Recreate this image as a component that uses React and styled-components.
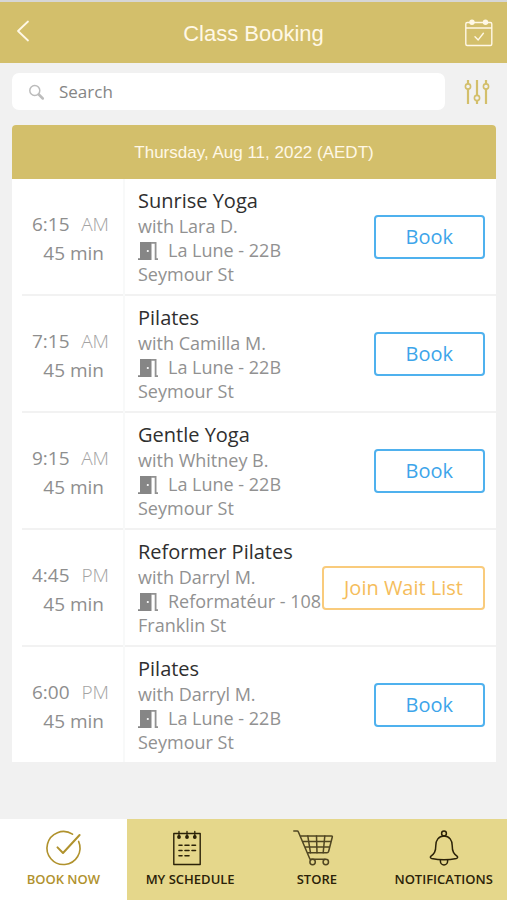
import React from 'react';
import styled, { createGlobalStyle } from 'styled-components';

const gold = '#d3bf6b';
const sans = '"Open Sans", "Noto Sans", sans-serif';
const headingFont = '"Liberation Sans", Arial, sans-serif';

const GlobalStyle = createGlobalStyle`
  *, *::before, *::after { box-sizing: border-box; }
  body { margin: 0; background: #f1f1f1; font-family: ${sans}; }
  button, input { font: inherit; }
  h1, h2, h3, p, ul { margin: 0; padding: 0; }
`;

const Page = styled.div`
  display: flex;
  flex-direction: column;
  min-height: 100vh;
  border-top: 2px solid #d6d6d6;
`;

const Header = styled.header`
  display: grid;
  grid-template-columns: 48px 1fr 48px;
  align-items: center;
  height: 61px;
  padding: 0 4px;
  background: ${gold};
  color: #fff8e6;
`;

const Title = styled.h1`
  font: 400 22px/28px ${headingFont};
  text-align: center;
  padding-top: 2px;
`;

const IconButton = styled.button`
  display: flex;
  align-items: center;
  justify-content: center;
  height: 40px;
  padding: 0;
  border: 0;
  background: none;
  color: inherit;
  cursor: pointer;
`;

const BackButton = styled(IconButton)`
  justify-content: flex-start;
  padding: 0 0 4px 12px;
`;

const SearchBar = styled.form`
  display: flex;
  align-items: center;
  gap: 14px;
  padding: 10px 12px 15px;
  color: ${gold};
`;

const SearchField = styled.label`
  display: flex;
  flex: 1;
  align-items: center;
  gap: 14px;
  height: 37px;
  padding: 0 16px;
  border-radius: 7px;
  background: #fff;
  color: #bcbcbc;
`;

const SearchInput = styled.input`
  flex: 1;
  min-width: 0;
  padding: 0;
  border: 0;
  outline: 0;
  background: none;
  color: #555;
  font-size: 17px;
  line-height: 24px;
  &::placeholder { color: #858585; opacity: 1; }
`;

const FilterButton = styled(IconButton)`
  width: 36px;
  height: 37px;
`;

const Card = styled.section`
  margin: 0 11px 24px 12px;
  border-radius: 4px 4px 0 0;
  background: #fff;
  overflow: hidden;
`;

const DateHeading = styled.h2`
  padding: 16px 8px 14px;
  background: ${gold};
  color: #fff8e6;
  font: 400 17px/24px ${headingFont};
  text-align: center;
`;

const ClassList = styled.ul`
  list-style: none;
`;

const ClassRow = styled.li`
  display: flex;
  align-items: stretch;
  padding-right: 11px;
  background: linear-gradient(#f2f2f2, #f2f2f2) 10px 100% / 100% 2px no-repeat;
  &:last-child { background: none; }
`;

const Time = styled.div`
  width: 113px;
  flex: none;
  padding: 31px 14px 0 20px;
  border-right: 2px solid #f8f9f9;
  color: #8e8e8e;
  font-size: 19px;
  line-height: 29px;
  text-align: right;
  white-space: nowrap;
`;

const ClockTime = styled.div`
  display: flex;
  justify-content: space-between;
`;

const Meridiem = styled.span`
  color: #a3a3a3;
  font-weight: 300;
`;

const Duration = styled.div`
  padding-right: 5px;
`;

const Details = styled.div`
  flex: 1;
  min-width: 0;
  padding: 9px 0 10px 13px;
  color: #919191;
  font-size: 18px;
  line-height: 24px;
  ${ClassRow}:last-child & { padding-bottom: 8px; }
`;

const ClassName = styled.h3`
  color: #2f2f2f;
  font-size: 20px;
  font-weight: 400;
  line-height: 26px;
  white-space: nowrap;
`;

const Place = styled.p`
  max-width: 186px;
  svg { margin-right: 10px; vertical-align: -4px; }
`;

const BookingButton = styled.button`
  flex: none;
  align-self: flex-start;
  height: 44px;
  margin-top: 36px;
  padding: 0 ${p => (p.$waitlist ? 20 : 30)}px;
  border: 2px solid ${p => (p.$waitlist ? '#f9cb7c' : '#4fb1ee')};
  border-radius: 4px;
  background: #fff;
  color: ${p => (p.$waitlist ? '#f5bd5c' : '#3da5ea')};
  font-size: 20px;
  line-height: 26px;
  white-space: nowrap;
  cursor: pointer;
`;

const TabBar = styled.nav`
  position: sticky;
  bottom: 0;
  display: grid;
  grid-template-columns: repeat(4, 1fr);
  margin-top: auto;
  background: #e5d78b;
`;

const Tab = styled.a`
  display: flex;
  flex-direction: column;
  align-items: center;
  height: 81px;
  padding-top: 9px;
  background: ${p => (p.$active ? '#fff' : 'transparent')};
  color: ${p => (p.$active ? '#b0922d' : '#2b2208')};
  font-size: 13px;
  font-weight: 600;
  line-height: 20px;
  text-decoration: none;
  white-space: nowrap;
  svg { margin-bottom: 1px; }
`;

const stroke = {
  fill: 'none',
  stroke: 'currentColor',
  strokeLinecap: 'round',
  strokeLinejoin: 'round',
  'aria-hidden': true,
};

const BackIcon = () => (
  <svg width="14" height="22" viewBox="0 0 14 22" {...stroke} strokeWidth="1.8">
    <path d="M12 1.5 2 11l10 9.5" />
  </svg>
);

const CalendarIcon = () => (
  <svg width="30" height="30" viewBox="0 0 30 30" {...stroke} strokeWidth="1.4">
    <path d="M6 4.5H3.2Q1.8 4.5 1.8 6V26Q1.8 27.5 3.2 27.5H26.4Q27.8 27.5 27.8 26V6Q27.8 4.5 26.4 4.5H23.5M10 4.5H19.5M1.8 10H27.8" />
    <circle cx="8" cy="4.3" r="2" fill="currentColor" />
    <circle cx="21.5" cy="4.3" r="2" fill="currentColor" />
    <path d="m11 18.7 3.2 3.2 5.2-6.6" />
  </svg>
);

const SearchIcon = () => (
  <svg width="17" height="18" viewBox="0 0 17 18" {...stroke}>
    <circle cx="6.8" cy="7.5" r="5" strokeWidth="1.5" />
    <path d="m10.8 11.5 4 4" strokeWidth="2.5" />
  </svg>
);

const FilterIcon = () => (
  <svg width="26" height="26" viewBox="0 0 26 26" {...stroke} strokeWidth="2.2" strokeLinecap="butt">
    <path d="M4 1V5M4 10V25M13 1V16.5M13 21.5V25M22 1V5M22 10V25" />
    <g strokeWidth="1.6">
      <circle cx="4" cy="7.5" r="2.6" />
      <circle cx="13" cy="19" r="2.6" />
      <circle cx="22" cy="7.5" r="2.6" />
    </g>
  </svg>
);

const DoorIcon = () => (
  <svg width="20" height="20" viewBox="0 0 20 20" fill="none" aria-hidden="true">
    <path d="M2 1h11.5v18H0V17.2h2z" fill="#868686" />
    <path d="M13 1.9h4.6v16.2H20" stroke="#929292" strokeWidth="1.8" />
    <circle cx="9.8" cy="10" r="1.1" fill="#fff" />
  </svg>
);

const BookIcon = () => (
  <svg width="40" height="40" viewBox="0 0 40 40" {...stroke} strokeWidth="1.6">
    <path d="M29.5 6.2A16.5 16.5 0 1 0 35.6 13.4" />
    <path d="m14.5 19.4 5.5 5.6L36.6 7" strokeWidth="2" />
  </svg>
);

const ScheduleIcon = () => (
  <svg width="40" height="40" viewBox="0 0 40 40" {...stroke} strokeWidth="1.4">
    <path d="M3.8 5.5H30.2V36.5H3.8Z" />
    <path d="M9 3.5V8M17 3.5V8M24.8 3.5V8" strokeWidth="1.3" />
    <g fill="currentColor">
      <circle cx="9" cy="9" r="1.2" />
      <circle cx="17" cy="9" r="1.2" />
      <circle cx="24.8" cy="9" r="1.2" />
    </g>
    <path d="M9 17.3h3M15 17.3h4M22 17.3h3.5M9 22.5h3M15 22.5h4M22 22.5h3.5M9 27.7h3M15 27.7h4" strokeWidth="1.6" />
  </svg>
);

const CartIcon = () => (
  <svg width="48" height="40" viewBox="0 0 48 40" {...stroke} strokeWidth="1.5" opacity=".8">
    <path d="M.8 3H4.2Q5 3 5.4 4L17 31.3H32M7 8H38.5Q39.6 8 39.3 9L35.6 23.5Q35.2 24.8 34 24.8H14.5M9.5 13.5H38M12 19H36.8" />
    <path d="m14.8 8 2.7 16.8M23.5 8l.5 16.8M31.8 8l-1.6 16.8" />
    <circle cx="19.6" cy="34" r="2.7" fill="#e5d78b" />
    <circle cx="32.8" cy="34" r="2.7" fill="#e5d78b" />
  </svg>
);

const BellIcon = () => (
  <svg width="40" height="40" viewBox="0 0 40 40" {...stroke} strokeWidth="1.5">
    <circle cx="20" cy="5.5" r="2.4" />
    <path d="M20 8C14.5 8 11.8 12.5 11.8 17.5 11.8 24 10 26 7 28.2 6 29 6.2 30 7.5 30.4Q20 33 32.5 30.4C33.8 30 34 29 33 28.2 30 26 28.2 24 28.2 17.5 28.2 12.5 25.5 8 20 8Z" />
    <path d="M16.4 31.7v1.6a3.6 3.6 0 0 0 7.2 0v-1.6" />
  </svg>
);

const laLune = 'La Lune - 22B Seymour St';
const classes = [
  { time: '6:15', half: 'AM', name: 'Sunrise Yoga', teacher: 'Lara D.', place: laLune },
  { time: '7:15', half: 'AM', name: 'Pilates', teacher: 'Camilla M.', place: laLune },
  { time: '9:15', half: 'AM', name: 'Gentle Yoga', teacher: 'Whitney B.', place: laLune },
  { time: '4:45', half: 'PM', name: 'Reformer Pilates', teacher: 'Darryl M.', place: 'Reformatéur - 108 Franklin St', full: true },
  { time: '6:00', half: 'PM', name: 'Pilates', teacher: 'Darryl M.', place: laLune },
];

const tabs = [
  { label: 'BOOK NOW', href: '#book', Icon: BookIcon, active: true },
  { label: 'MY SCHEDULE', href: '#schedule', Icon: ScheduleIcon },
  { label: 'STORE', href: '#store', Icon: CartIcon },
  { label: 'NOTIFICATIONS', href: '#notifications', Icon: BellIcon },
];

export default function App() {
  return (
    <Page>
      <GlobalStyle />
      <Header>
        <BackButton type="button" aria-label="Back"><BackIcon /></BackButton>
        <Title>Class Booking</Title>
        <IconButton type="button" aria-label="Calendar"><CalendarIcon /></IconButton>
      </Header>
      <SearchBar role="search" onSubmit={e => e.preventDefault()}>
        <SearchField>
          <SearchIcon />
          <SearchInput type="text" placeholder="Search" aria-label="Search" />
        </SearchField>
        <FilterButton type="button" aria-label="Filters"><FilterIcon /></FilterButton>
      </SearchBar>
      <Card>
        <DateHeading>Thursday, Aug 11, 2022 (AEDT)</DateHeading>
        <ClassList>
          {classes.map(c => (
            <ClassRow key={c.time}>
              <Time>
                <ClockTime><span>{c.time}</span><Meridiem>{c.half}</Meridiem></ClockTime>
                <Duration>45 min</Duration>
              </Time>
              <Details>
                <ClassName>{c.name}</ClassName>
                <p>with {c.teacher}</p>
                <Place><DoorIcon />{c.place}</Place>
              </Details>
              <BookingButton type="button" $waitlist={c.full}>{c.full ? 'Join Wait List' : 'Book'}</BookingButton>
            </ClassRow>
          ))}
        </ClassList>
      </Card>
      <TabBar aria-label="Main">
        {tabs.map(({ label, href, Icon, active }) => (
          <Tab key={label} href={href} $active={active} aria-current={active ? 'page' : undefined}>
            <Icon />
            {label}
          </Tab>
        ))}
      </TabBar>
    </Page>
  );
}
